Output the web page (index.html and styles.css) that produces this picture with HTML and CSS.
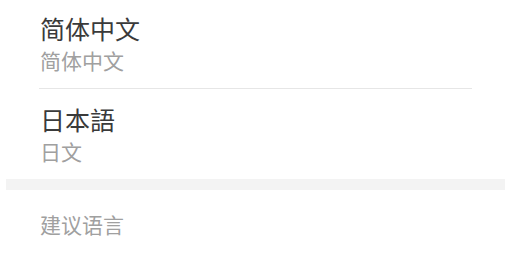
FILE: index.html
```html
<!DOCTYPE html>
<html lang="zh-CN">
<head>
    <meta charset="UTF-8">
    <meta name="viewport" content="width=device-width, initial-scale=1.0">
    <title>语言</title>
    <link rel="stylesheet" href="styles.css">
</head>
<body>
    <main class="page">
        <ul class="lang-list">
            <li class="lang-item">
                <span class="lang-name">简体中文</span>
                <span class="lang-sub">简体中文</span>
            </li>
            <li class="lang-item">
                <span class="lang-name">日本語</span>
                <span class="lang-sub">日文</span>
            </li>
        </ul>
        <div class="section-gap"></div>
        <h2 class="section-title">建议语言</h2>
    </main>
</body>
</html>
```

FILE: styles.css
```css
* {
    margin: 0;
    padding: 0;
    box-sizing: border-box;
}

body {
    font-family: "Noto Sans CJK SC", "Noto Sans", sans-serif;
    background: #ffffff;
    color: #333333;
}

.page {
    display: flex;
    flex-direction: column;
}

.lang-list {
    list-style: none;
    margin: 0 43px 0 39px;
}

.lang-item {
    display: flex;
    flex-direction: column;
    gap: 3px;
    padding: 13px 0 14px 1px;
    border-bottom: 1px solid #e6e6e6;
}

.lang-item:last-child {
    border-bottom: none;
    padding-top: 15px;
}

.lang-name {
    font-size: 25px;
    line-height: 30px;
    color: #3a3a3a;
}

.lang-sub {
    font-size: 21px;
    line-height: 28px;
    color: #a0a0a0;
}

.section-gap {
    height: 11px;
    margin: 0 10px 0 6px;
    background: #f3f3f3;
}

.section-title {
    font-size: 21px;
    line-height: 28px;
    font-weight: normal;
    color: #a0a0a0;
    padding: 20px 0 0 40px;
}
```
